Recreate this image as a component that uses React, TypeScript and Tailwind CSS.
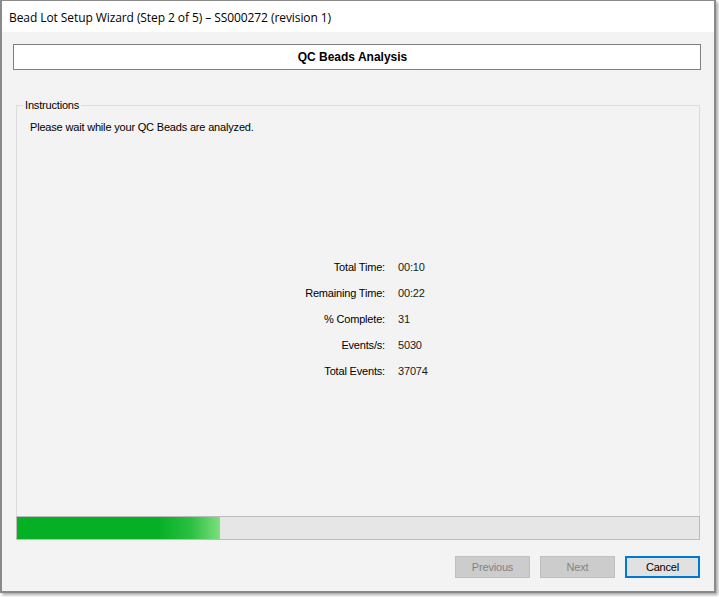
import React from "react";

const stats = [
  { label: "Total Time:", value: "00:10" },
  { label: "Remaining Time:", value: "00:22" },
  { label: "% Complete:", value: "31" },
  { label: "Events/s:", value: "5030" },
  { label: "Total Events:", value: "37074" },
];

export default function App() {
  return (
    <div className="w-[719px] h-[597px] bg-white font-['Liberation_Sans',Arial,sans-serif] text-[11px] tracking-[-0.18px] text-black">
      <div className="w-[716px] h-[593px] flex flex-col border-x-2 border-b-2 border-t border-[#8a8a8a] shadow-[2px_2px_3px_rgba(0,0,0,0.35)] bg-[#f3f3f3]">
        {/* title bar */}
        <div className="h-[31px] bg-white flex items-center pl-[7px] pt-[2px] text-[12px] font-['Open_Sans',sans-serif] tracking-[-0.08px]">
          Bead Lot Setup Wizard (Step 2 of 5) – SS000272 (revision 1)
        </div>

        <div className="flex-1 flex flex-col">
          <div className="mt-[12px] ml-[11px] mr-[13px] h-[26px] pr-[9px] bg-white border border-[#7f7f7f] flex items-center justify-center font-bold text-[12px] tracking-normal">
            QC Beads Analysis
          </div>

          <fieldset className="mt-[29px] ml-[14px] mr-[14px] flex-1 border-x border-t border-[#dcdcdc] px-[13px]">
            <legend className="ml-[-7px] px-[2px] leading-[13px]">Instructions</legend>
            <p className="mt-[9px] leading-[13px]">Please wait while your QC Beads are analyzed.</p>

            <div className="mt-[120px] ml-[235px] grid grid-cols-[120px_auto] gap-x-[13px]">
              {stats.map((s) => (
                <React.Fragment key={s.label}>
                  <div className="h-[26px] flex items-center justify-end">{s.label}</div>
                  <div className="h-[26px] flex items-center text-[#1a1a1a]">{s.value}</div>
                </React.Fragment>
              ))}
            </div>
          </fieldset>

          <div className="ml-[14px] mr-[14px] h-[24px] border border-[#bcbcbc] bg-[#e6e6e6]">
            <div className="h-full w-[203px] bg-[linear-gradient(to_right,#06b025_0%,#06b025_70%,#2cc043_86%,#7de07d_100%)]" />
          </div>

          <div className="mt-[16px] mb-[13px] mr-[14px] flex justify-end gap-[10px]">
            <button className="w-[75px] h-[22px] bg-[#cccccc] border border-[#bfbfbf] text-[#838383] text-[11px]">
              Previous
            </button>
            <button className="w-[75px] h-[22px] bg-[#cccccc] border border-[#bfbfbf] text-[#838383] text-[11px]">
              Next
            </button>
            <button className="w-[75px] h-[22px] bg-[#e1e1e1] border-2 border-[#0078d7] text-black text-[11px]">
              Cancel
            </button>
          </div>
        </div>
      </div>
    </div>
  );
}
